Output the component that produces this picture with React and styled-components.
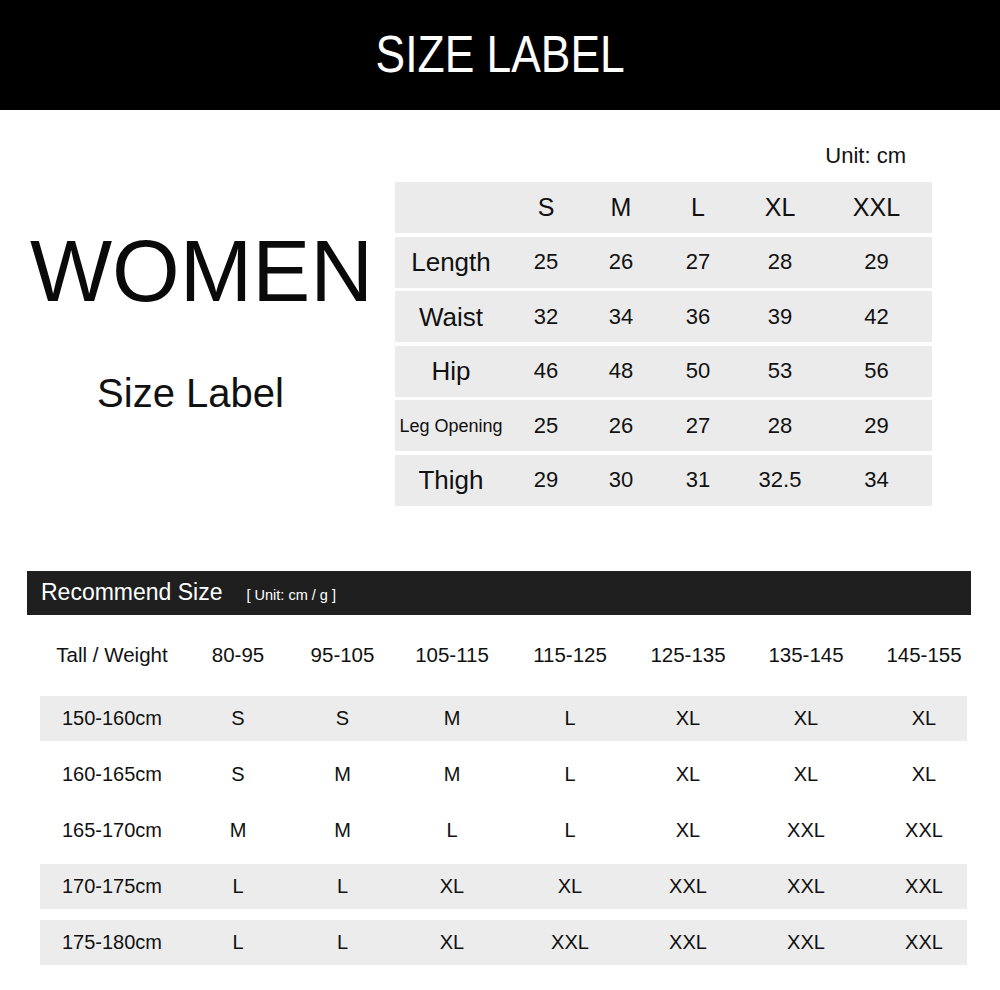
import React from "react";
import styled, { createGlobalStyle } from "styled-components";

const GlobalStyle = createGlobalStyle`
  html, body { margin: 0; padding: 0; background: #fff; }
  body { font-family: "Liberation Sans", Arial, Helvetica, sans-serif; color: #111; }
  * { box-sizing: border-box; }
`;

const Page = styled.div`
  width: 1000px;
  min-height: 990px;
  background: #fff;
  overflow: hidden;
`;

const Header = styled.header`
  height: 110px;
  background: #000;
  display: flex;
  align-items: center;
  justify-content: center;
`;

const HeaderTitle = styled.h1`
  margin: 0 0 2px;
  color: #fff;
  font: 400 51px/1 "Liberation Sans", Arial, sans-serif;
  transform: scaleX(0.87);
  letter-spacing: 0;
`;

const TopSection = styled.section`
  display: flex;
  align-items: flex-start;
`;

const Intro = styled.div`
  width: 395px;
  padding-top: 117px;
  display: flex;
  flex-direction: column;
  align-items: center;
`;

const Women = styled.h2`
  margin: 0 0 0 8px;
  font: 400 87px/1 "Liberation Sans", Arial, sans-serif;
  color: #0a0a0a;
`;

const SubTitle = styled.div`
  margin: 59px 14px 0 0;
  font: 400 40px/1 "Liberation Sans", Arial, sans-serif;
  color: #111;
`;

const SizeSpec = styled.div`
  width: 537px;
  padding-top: 34px;
`;

const UnitNote = styled.div`
  text-align: right;
  padding-right: 26px;
  font-size: 22px;
  line-height: 24px;
  color: #111;
`;

const SpecTable = styled.div`
  margin-top: 14px;
  display: flex;
  flex-direction: column;
  gap: 3.5px;
`;

const SpecRow = styled.div`
  display: grid;
  grid-template-columns: 112px 78px 72px 82px 82px 1fr;
  align-items: center;
  height: 51px;
  background: #ebebeb;
`;

const SpecCell = styled.div`
  text-align: center;
  font-size: ${(p) => (p.$head ? 25 : 22)}px;
  line-height: 1;
  color: #111;
`;

const SpecLabel = styled.div`
  text-align: center;
  font-size: ${(p) => (p.$small ? 18 : 26)}px;
  line-height: 1;
  color: #111;
`;

const Recommend = styled.section`
  margin-top: 65px;
  padding-left: 27px;
`;

const RecommendBar = styled.div`
  width: 944px;
  height: 44px;
  background: #1f1f1f;
  display: flex;
  align-items: center;
  padding-left: 14px;
`;

const BarTitle = styled.div`
  color: #fff;
  font-size: 23px;
  line-height: 1.15;
  white-space: nowrap;
`;

const BarNote = styled.span`
  font-size: 14.5px;
  margin-left: 24px;
`;

const RecTable = styled.div`
  margin-left: 13px;
  width: 927px;
`;

const RecGrid = styled.div`
  display: grid;
  grid-template-columns: 144px 108px 101px repeat(4, 118px) 1fr;
  align-items: center;
  height: 45px;
  background: ${(p) => (p.$shaded ? "#ececec" : "transparent")};

  & > div:last-child {
    padding-left: 16px;
  }
`;

const RecHead = styled(RecGrid)`
  margin-top: 18px;
`;

const RecRows = styled.div`
  margin-top: 18px;
  display: flex;
  flex-direction: column;
  gap: 11px;
`;

const RecCell = styled.div`
  text-align: center;
  font-size: ${(p) => (p.$head ? 20.5 : 20)}px;
  line-height: 1;
  color: #111;
  white-space: nowrap;
`;

const sizes = ["S", "M", "L", "XL", "XXL"];

const specRows = [
  { name: "Length", values: ["25", "26", "27", "28", "29"] },
  { name: "Waist", values: ["32", "34", "36", "39", "42"] },
  { name: "Hip", values: ["46", "48", "50", "53", "56"] },
  { name: "Leg Opening", values: ["25", "26", "27", "28", "29"], small: true },
  { name: "Thigh", values: ["29", "30", "31", "32.5", "34"] },
];

const weights = ["80-95", "95-105", "105-115", "115-125", "125-135", "135-145", "145-155"];

const recRows = [
  { tall: "150-160cm", sizes: ["S", "S", "M", "L", "XL", "XL", "XL"], shaded: true },
  { tall: "160-165cm", sizes: ["S", "M", "M", "L", "XL", "XL", "XL"], shaded: false },
  { tall: "165-170cm", sizes: ["M", "M", "L", "L", "XL", "XXL", "XXL"], shaded: false },
  { tall: "170-175cm", sizes: ["L", "L", "XL", "XL", "XXL", "XXL", "XXL"], shaded: true },
  { tall: "175-180cm", sizes: ["L", "L", "XL", "XXL", "XXL", "XXL", "XXL"], shaded: true },
];

export default function App() {
  return (
    <Page>
      <GlobalStyle />
      <Header>
        <HeaderTitle>SIZE LABEL</HeaderTitle>
      </Header>

      <TopSection>
        <Intro>
          <Women>WOMEN</Women>
          <SubTitle>Size Label</SubTitle>
        </Intro>
        <SizeSpec>
          <UnitNote>Unit: cm</UnitNote>
          <SpecTable>
            <SpecRow>
              <SpecLabel />
              {sizes.map((s) => (
                <SpecCell key={s} $head>
                  {s}
                </SpecCell>
              ))}
            </SpecRow>
            {specRows.map((r) => (
              <SpecRow key={r.name}>
                <SpecLabel $small={r.small}>{r.name}</SpecLabel>
                {r.values.map((v, i) => (
                  <SpecCell key={i}>{v}</SpecCell>
                ))}
              </SpecRow>
            ))}
          </SpecTable>
        </SizeSpec>
      </TopSection>

      <Recommend>
        <RecommendBar>
          <BarTitle>
            Recommend Size<BarNote>[ Unit: cm / g ]</BarNote>
          </BarTitle>
        </RecommendBar>
        <RecTable>
          <RecHead>
            <RecCell $head>Tall / Weight</RecCell>
            {weights.map((w) => (
              <RecCell key={w} $head>
                {w}
              </RecCell>
            ))}
          </RecHead>
          <RecRows>
            {recRows.map((r) => (
              <RecGrid key={r.tall} $shaded={r.shaded}>
                <RecCell>{r.tall}</RecCell>
                {r.sizes.map((s, i) => (
                  <RecCell key={i}>{s}</RecCell>
                ))}
              </RecGrid>
            ))}
          </RecRows>
        </RecTable>
      </Recommend>
    </Page>
  );
}
